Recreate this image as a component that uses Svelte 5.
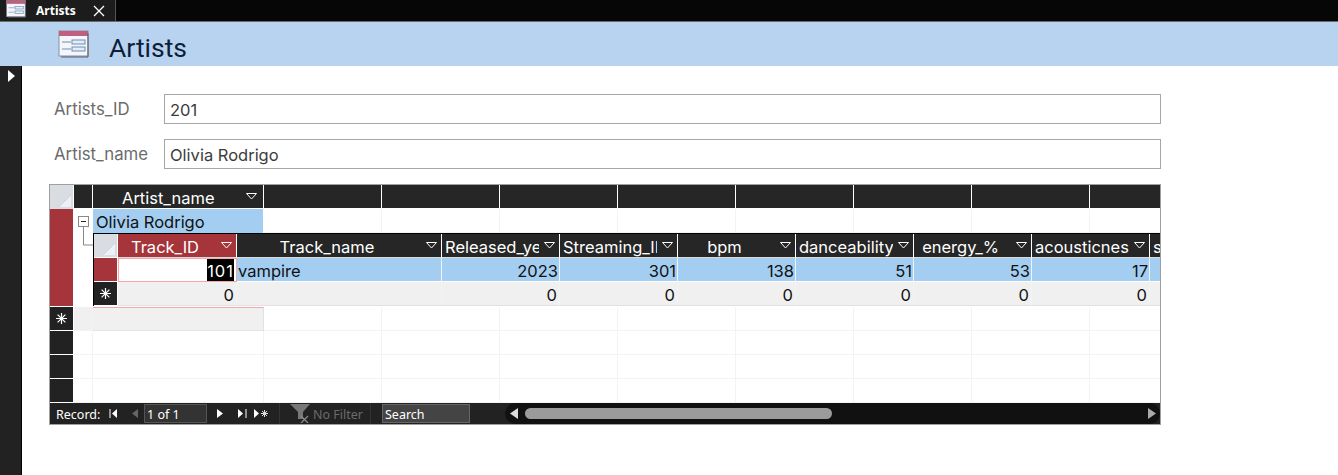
<script>
	const subCols = [
		{ name: 'Track_ID', align: 'center', active: true },
		{ name: 'Track_name', align: 'center' },
		{ name: 'Released_year', align: 'left' },
		{ name: 'Streaming_ID', align: 'left' },
		{ name: 'bpm', align: 'center' },
		{ name: 'danceability', align: 'left' },
		{ name: 'energy_%', align: 'center' },
		{ name: 'acousticness', align: 'left' }
	];
	const values = [2023, 301, 138, 51, 53, 17];
	const emptyCols = Array(8);
	const blankRows = Array(3);
</script>

{#snippet arrow()}
	<svg class="arrow" width="11" height="7" viewBox="0 0 11 7"><path d="M.5.5h10L5.5 6z" fill="none" stroke="#fff" /></svg>
{/snippet}

{#snippet star()}
	<svg width="13" height="13" viewBox="0 0 13 13"><path d="M6.5 1v11M1 6.5h11M2.6 2.6l7.8 7.8M10.4 2.6l-7.8 7.8" stroke="#fff" stroke-width="1.2" /></svg>
{/snippet}

{#snippet cornerMark()}
	<svg width="12" height="12" viewBox="0 0 12 12"><path d="M12 0v12H0z" fill="#eef0f4" /><path d="M12 0L0 12" stroke="#c6d2ea" /></svg>
{/snippet}

{#snippet formIcon(w, h)}
	<svg width={w} height={h} viewBox="0 0 31 28">
		<rect x="1" y="1" width="29" height="25" fill="#f4f6fa" stroke="#8a8f9c" />
		<rect x="1" y="1" width="29" height="5" fill="#c0607e" />
		<path d="M4 12h9M4 19h9" stroke="#6f8db5" />
		<rect x="14" y="10" width="13" height="4" fill="#e3ecf8" stroke="#6f8db5" />
		<rect x="14" y="17" width="13" height="4" fill="#e3ecf8" stroke="#6f8db5" />
		<path d="M30 3v24H3" fill="none" stroke="#5a5f6a" />
	</svg>
{/snippet}

<div class="tabbar">
	<div class="tab">
		<span class="tab-icon">{@render formIcon(20, 18)}</span>
		<span class="tab-label">Artists</span>
		<svg class="close" width="12" height="12" viewBox="0 0 12 12"><path d="M1 1l10 10M11 1L1 11" stroke="#fff" stroke-width="1.3" /></svg>
	</div>
</div>

<header class="title">
	{@render formIcon(31, 28)}
	<h1>Artists</h1>
</header>

<div class="main">
	<aside class="nav">
		<svg width="7" height="12" viewBox="0 0 7 12"><path d="M0 0l7 6-7 6z" fill="#fff" /></svg>
	</aside>

	<div class="content">
		<div class="field">
			<label for="artist-id">Artists_ID</label>
			<input id="artist-id" value="201" />
		</div>
		<div class="field">
			<label for="artist-name">Artist_name</label>
			<input id="artist-name" value="Olivia Rodrigo" />
		</div>

		<div class="sheet">
			<div class="grid">
				<div class="corner">{@render cornerMark()}</div>
				<div class="hd dark"></div>
				<div class="hd dark col-name"><span>Artist_name</span> {@render arrow()}</div>
				{#each emptyCols as _}<div class="hd dark"></div>{/each}

				<div class="selector red tall"></div>
				<div class="tree">
					<svg width="19" height="49" viewBox="0 0 19 49">
						<rect x="4.5" y="7.5" width="10" height="10" fill="#fff" stroke="#888" />
						<path d="M7 12.5h5" stroke="#222" />
						<path d="M9.5 18v18H19" fill="none" stroke="#888" />
					</svg>
				</div>
				<div class="cell picked">Olivia Rodrigo</div>
				{#each emptyCols as _}<div class="cell"></div>{/each}

				<div class="sub">
					<div class="sub-grid">
						<div class="corner small">{@render cornerMark()}</div>
						{#each subCols as col}
							<div class="sub-hd" class:active={col.active} class:left={col.align === 'left'}>
								<span class="hd-text">{col.name}</span>
								{@render arrow()}
							</div>
						{/each}
						<div class="sub-hd left"><span class="hd-text">s</span></div>

						<div class="selector red"></div>
						<div class="sub-cell current"><span class="sel">101</span></div>
						<div class="sub-cell blue text">vampire</div>
						{#each values as v}<div class="sub-cell blue">{v}</div>{/each}
						<div class="sub-cell blue"></div>

						<div class="selector dark-sel">{@render star()}</div>
						<div class="sub-cell new">0</div>
						<div class="sub-cell new"></div>
						{#each values as _}<div class="sub-cell new">0</div>{/each}
						<div class="sub-cell new"></div>
					</div>
				</div>

				<div class="selector dark-sel">{@render star()}</div>
				<div class="cell new-gutter"></div>
				<div class="cell new-row"></div>
				{#each emptyCols as _}<div class="cell"></div>{/each}

				{#each blankRows as _}
					<div class="selector dark-sel"></div>
					<div class="cell"></div>
					<div class="cell"></div>
					{#each emptyCols as _}<div class="cell"></div>{/each}
				{/each}
			</div>

			<div class="footer">
				<span class="rec">Record:</span>
				<svg class="nav-first" width="9" height="9" viewBox="0 0 9 9"><path d="M1 0v9" stroke="#fff" /><path d="M8 0L3 4.5 8 9z" fill="#fff" /></svg>
				<svg class="nav-prev" width="6" height="9" viewBox="0 0 6 9"><path d="M6 0L0 4.5 6 9z" fill="#666" /></svg>
				<span class="pos">1 of 1</span>
				<svg class="nav-next" width="6" height="9" viewBox="0 0 6 9"><path d="M0 0l6 4.5L0 9z" fill="#fff" /></svg>
				<svg class="nav-last" width="9" height="9" viewBox="0 0 9 9"><path d="M0 0l5 4.5L0 9z" fill="#fff" /><path d="M8 0v9" stroke="#fff" /></svg>
				<svg class="nav-new" width="15" height="9" viewBox="0 0 15 9"><path d="M0 0l5 4.5L0 9z" fill="#fff" /><path d="M10.5 1v7M7 4.5h7M8 2l5 5M13 2L8 7" stroke="#ddd" /></svg>
				<span class="sep"></span>
				<svg class="funnel" width="22" height="19" viewBox="0 0 22 19"><path d="M0 0h20l-7 8v7H8V8z" fill="#777" /><path d="M11 12l7 7M18 12l-7 7" stroke="#8a8a8a" stroke-width="1.3" /></svg>
				<span class="nofilter">No Filter</span>
				<span class="sep second"></span>
				<span class="search">Search</span>
				<div class="scroll">
					<svg class="sc-left" width="8" height="11" viewBox="0 0 8 11"><path d="M8 0L0 5.5 8 11z" fill="#ddd" /></svg>
					<div class="track"><div class="thumb"></div></div>
					<svg class="sc-right" width="8" height="11" viewBox="0 0 8 11"><path d="M0 0l8 5.5L0 11z" fill="#aaa" /></svg>
				</div>
			</div>
		</div>
	</div>
</div>

<style>
	:global(body) {
		background: #fff;
		overflow: hidden;
	}
	:global(#app) {
		font-family: Inter, "Noto Sans", sans-serif;
		height: 475px;
		display: flex;
		flex-direction: column;
	}
	.tabbar {
		height: 21px;
		background: #060606;
		border-bottom: 1px solid #6a6a6a;
		flex: none;
	}
	.tab {
		width: 116px;
		height: 21px;
		background: #1c1c1c;
		border-right: 1px solid #555;
		box-sizing: border-box;
		display: flex;
		align-items: center;
		color: #fff;
		overflow: hidden;
	}
	.tab-icon {
		margin: -4px 0 0 6px;
		height: 18px;
	}
	.tab-label {
		font-family: "Noto Sans", sans-serif;
		font-weight: 700;
		font-size: 12px;
		margin-left: 10px;
	}
	.close {
		margin-left: 17px;
	}
	.title {
		height: 44px;
		background: #b8d3f0;
		display: flex;
		align-items: center;
		padding-left: 58px;
		flex: none;
	}
	h1 {
		font-family: Roboto, sans-serif;
		font-weight: 400;
		font-size: 26.5px;
		color: #0e1e38;
		margin: 6px 0 0 20px;
	}
	.main {
		flex: 1;
		display: flex;
		min-height: 0;
	}
	.nav {
		background: #222;
		border-right: 1px solid #000;
		padding: 4px 0 0 8px;
		box-sizing: border-box;
		width: 22px;
	}
	.nav svg {
		display: block;
	}
	.content {
		padding: 28px 0 0 27px;
		width: 1112px;
	}
	.field {
		display: flex;
		align-items: center;
		height: 30px;
		margin-bottom: 15px;
		padding-left: 5px;
	}
	label {
		width: 110px;
		font-size: 16.8px;
		color: #6b6b6b;
	}
	input {
		width: 997px;
		height: 30px;
		box-sizing: border-box;
		border: 1px solid #a6a6a6;
		padding: 1px 5px 0;
		font: 16.5px Inter, sans-serif;
		color: #3c3c3c;
		outline: none;
	}
	.sheet {
		width: 1112px;
		height: 241px;
		box-sizing: border-box;
		border: 1px solid #a0a0a0;
		overflow: hidden;
		display: flex;
		flex-direction: column;
		background: #fff;
	}
	.grid {
		display: grid;
		grid-template-columns: 24px 19px 171px repeat(8, 118px);
		grid-template-rows: 24px 24px 74px 24px 24px 24px 24px;
		height: 218px;
		font-size: 16.5px;
		color: #111;
		flex: none;
	}
	.corner {
		background: #d9dce1;
		border-right: 1px solid #fff;
		box-sizing: border-box;
		display: flex;
		align-items: flex-end;
		justify-content: flex-end;
		padding: 0 2px 2px 0;
	}
	.hd {
		color: #fff;
		box-sizing: border-box;
		border-right: 1px solid #fff;
		border-bottom: 1px solid #fff;
	}
	.dark {
		background: #262626;
	}
	.col-name {
		padding-left: 29px;
		display: flex;
		align-items: center;
		justify-content: space-between;
		padding-right: 6px;
		white-space: nowrap;
	}
	.col-name span {
		padding-top: 3px;
	}
	.selector {
		box-sizing: border-box;
		border-bottom: 1px solid #fff;
		display: flex;
		align-items: center;
		justify-content: center;
		border-right: 1px solid #fff;
	}
	.red {
		background: #a5353a;
	}
	.tall {
		grid-row: span 2;
	}
	.dark-sel {
		background: #222;
	}
	.tree {
		grid-row: span 2;
		background: #fff;
	}
	.tree svg {
		display: block;
	}
	.cell {
		box-sizing: border-box;
		border-right: 1px solid #f3f3f3;
		border-bottom: 1px solid #f3f3f3;
		line-height: 21px;
		padding-top: 3px;
		white-space: nowrap;
		overflow: hidden;
	}
	.picked {
		background: #a3cef1;
		padding-left: 3px;
		border: none;
		margin-right: 1px;
	}
	.new-gutter {
		background: #f0f0f0;
	}
	.new-row {
		background: #f0f0f0;
		border-top: 1px solid #f6a6aa;
		border-bottom: 1px solid #e2e2e2;
		border-right: 1px solid #e2e2e2;
	}
	.sub {
		grid-column: 3 / -1;
		grid-row: 3;
		overflow: hidden;
		background: #fff;
		padding-top: 1px;
	}
	.sub-grid {
		display: grid;
		grid-template-columns: 24px 119px 205px repeat(6, 118px) 30px;
		grid-template-rows: 24px 24px 24px;
		border-top: 1px solid #000;
		border-left: 1px solid #000;
		width: 1067px;
		margin-top: -1px;
	}
	.corner.small {
		border-bottom: 1px solid #fff;
	}
	.sub-hd {
		background: #262626;
		color: #fff;
		box-sizing: border-box;
		border-right: 1px solid #fff;
		border-bottom: 1px solid #d9d9d9;
		display: flex;
		align-items: center;
		padding: 0 4px 0 3px;
		overflow: hidden;
		white-space: nowrap;
	}
	.hd-text {
		flex: 1;
		text-align: center;
		overflow: hidden;
		min-width: 0;
		padding: 3px 10px 0 0;
	}
	.sub-hd.left .hd-text {
		text-align: left;
		padding-right: 0;
		margin-right: 3px;
	}
	.sub-hd.active {
		background: #a5353a;
	}
	.arrow {
		flex: none;
		margin-left: 2px;
	}
	.sub-cell {
		box-sizing: border-box;
		border-right: 1px solid #f3f3f3;
		border-bottom: 1px solid #e2e2e2;
		text-align: right;
		padding: 3px 1px 0 0;
		line-height: 21px;
		white-space: nowrap;
		overflow: hidden;
	}
	.blue {
		background: #a3cef1;
		border-bottom-color: #fff;
	}
	.text {
		text-align: left;
		padding-left: 1px;
	}
	.current {
		background: #fff;
		border: 1px solid #f6a6aa;
		padding: 0 2px 0 0;
	}
	.sel {
		background: #000;
		color: #fff;
		display: inline-block;
		padding-top: 2px;
		line-height: 20px;
		letter-spacing: 1px;
	}
	.new {
		background: #f0f0f0;
		padding-right: 2px;
	}
	.footer {
		height: 21px;
		flex: none;
		background: #222;
		display: flex;
		align-items: center;
		color: #fff;
		font-family: "Noto Sans", sans-serif;
		font-size: 12.5px;
	}
	.rec {
		margin-left: 6px;
		width: 53px;
		padding-top: 2px;
	}
	.nav-prev {
		margin-left: 14px;
	}
	.pos {
		margin-left: 6px;
		width: 63px;
		height: 19px;
		line-height: 19px;
		box-sizing: border-box;
		border: 1px solid #555;
		background: #333;
		padding-left: 2px;
	}
	.nav-next {
		margin-left: 10px;
	}
	.nav-last {
		margin-left: 15px;
	}
	.nav-new {
		margin-left: 7px;
	}
	.sep {
		width: 1px;
		height: 21px;
		background: #333;
		margin-left: 10px;
	}
	.funnel {
		margin-left: 10px;
	}
	.nofilter {
		color: #6b6b6b;
		margin-left: 1px;
		width: 50px;
		padding-top: 2px;
	}
	.sep.second {
		margin-left: 7px;
	}
	.search {
		margin-left: 11px;
		width: 88px;
		height: 19px;
		line-height: 19px;
		box-sizing: border-box;
		border: 1px solid #666;
		background: #444;
		padding-left: 2px;
	}
	.scroll {
		margin-left: 35px;
		width: 655px;
		height: 21px;
		background: #111;
		border-radius: 11px;
		display: flex;
		align-items: center;
		padding: 0 4px 0 5px;
		box-sizing: border-box;
	}
	.track {
		flex: 1;
		margin: 0 6px 0 7px;
	}
	.thumb {
		width: 307px;
		height: 11px;
		border-radius: 6px;
		background: #9b9b9b;
	}
</style>
